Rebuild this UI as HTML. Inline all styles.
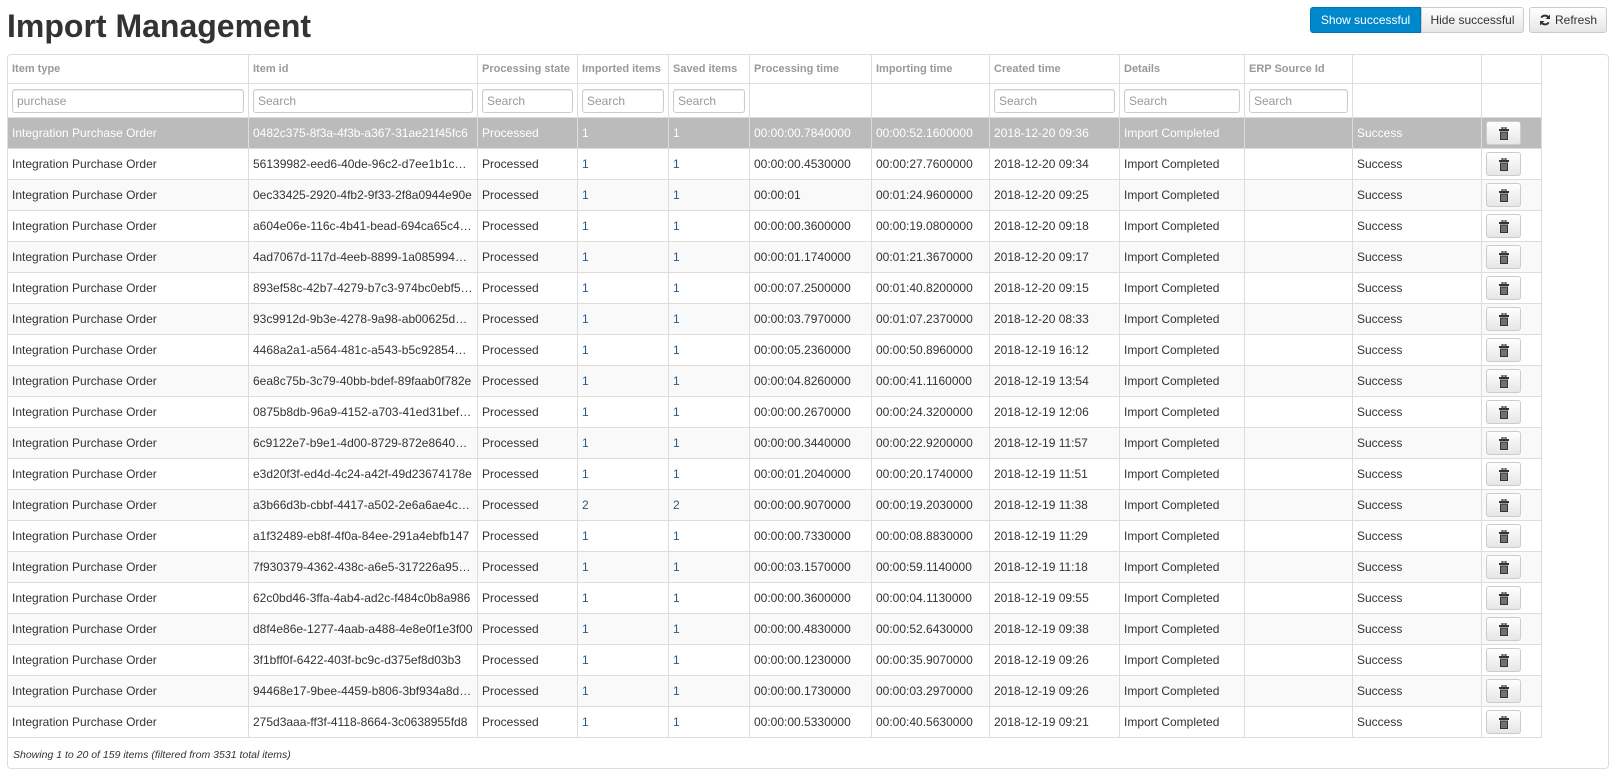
<!DOCTYPE html>
<html><head><meta charset="utf-8">
<style>
*{box-sizing:border-box;margin:0;padding:0}
body{width:1617px;height:778px;background:#fff;font-family:"Liberation Sans",Arial,sans-serif;font-size:12px;color:#333;position:relative;overflow:hidden}
h1{position:absolute;left:7px;top:8px;font-size:32px;font-weight:bold;color:#333;letter-spacing:0}
.btns{position:absolute;top:7px;left:1310px;height:26px}
.b{position:absolute;top:0;height:26px;line-height:24px;font-size:12px;text-align:center;border:1px solid #ccc;background:linear-gradient(#fff,#e6e6e6);color:#333}
.wrap{position:absolute;left:7px;top:54px;width:1602px;height:715px;border:1px solid #ddd;border-radius:4px;overflow:hidden}
table{border-collapse:collapse;table-layout:fixed;width:1534px;position:absolute;left:-1px;top:-1px}
td,th{border:1px solid #ddd;padding:0 4px;white-space:nowrap;overflow:hidden;text-overflow:ellipsis;text-align:left}
th{height:29px;font-size:11px;font-weight:bold;color:#999;vertical-align:middle}
tr.f td{height:34px}
tr.f input{width:100%;height:24px;border:1px solid #ccc;border-radius:3px;font-family:inherit;font-size:12px;padding:0 4px;color:#999;box-shadow:inset 0 1px 1px rgba(0,0,0,.08)}
tr.d td{height:31px}
tr.d:nth-child(odd) td{background:#f9f9f9}
tr.d.sel td{background:#bbb;color:#fff}
.n{color:#2a5a88}
tr.sel .n{color:#fff}
.tb{display:block;width:35px;height:24px;margin-left:0;border:1px solid #ccc;border-radius:3px;background:linear-gradient(#fff,#e6e6e6);position:relative}
.tb svg{position:absolute;left:12px;top:5px}
.foot{position:absolute;left:5px;top:694px;font-size:10.5px;font-style:italic;color:#333}
</style></head><body>
<h1>Import Management</h1>
<div class="btns">
<div class="b" style="left:0;width:111px;background:#0088cc;border-color:#0077b3;color:#fff;border-radius:3px 0 0 3px">Show successful</div>
<div class="b" style="left:111px;width:103px;border-radius:0 3px 3px 0">Hide successful</div>
<div class="b" style="left:219px;width:78px;border-radius:3px"><svg width="12" height="12" viewBox="0 0 12 12" style="vertical-align:-2px;margin-right:4px"><path d="M10 4.5A4.3 4.3 0 0 0 2.3 3.6M2 7.5a4.3 4.3 0 0 0 7.7.9" fill="none" stroke="#333" stroke-width="2"/><path d="M11 0.5v4.5H6.5z M1 11.5V7h4.5z" fill="#333"/></svg>Refresh</div>
</div>
<div class="wrap">
<table>
<colgroup><col style="width:241px"><col style="width:229px"><col style="width:100px"><col style="width:91px"><col style="width:81px"><col style="width:122px"><col style="width:118px"><col style="width:130px"><col style="width:125px"><col style="width:108px"><col style="width:129px"><col style="width:60px"></colgroup>
<tr><th>Item type</th><th>Item id</th><th>Processing state</th><th>Imported items</th><th>Saved items</th><th>Processing time</th><th>Importing time</th><th>Created time</th><th>Details</th><th>ERP Source Id</th><th></th><th></th></tr>
<tr class="f"><td><input value="purchase"></td><td><input value="Search"></td><td><input value="Search"></td><td><input value="Search"></td><td><input value="Search"></td><td></td><td></td><td><input value="Search"></td><td><input value="Search"></td><td><input value="Search"></td><td></td><td></td></tr>
</table>
<div class="foot">Showing 1 to 20 of 159 items (filtered from 3531 total items)</div>
</div>
<script>
var rows=[
["0482c375-8f3a-4f3b-a367-31ae21f45fc6",1,"00:00:00.7840000","00:00:52.1600000","2018-12-20 09:36"],
["56139982-eed6-40de-96c2-d7ee1b1c1f00",1,"00:00:00.4530000","00:00:27.7600000","2018-12-20 09:34"],
["0ec33425-2920-4fb2-9f33-2f8a0944e90e",1,"00:00:01","00:01:24.9600000","2018-12-20 09:25"],
["a604e06e-116c-4b41-bead-694ca65c4f00",1,"00:00:00.3600000","00:00:19.0800000","2018-12-20 09:18"],
["4ad7067d-117d-4eeb-8899-1a0859941f00",1,"00:00:01.1740000","00:01:21.3670000","2018-12-20 09:17"],
["893ef58c-42b7-4279-b7c3-974bc0ebf5a5",1,"00:00:07.2500000","00:01:40.8200000","2018-12-20 09:15"],
["93c9912d-9b3e-4278-9a98-ab00625d9f00",1,"00:00:03.7970000","00:01:07.2370000","2018-12-20 08:33"],
["4468a2a1-a564-481c-a543-b5c92854ef00",1,"00:00:05.2360000","00:00:50.8960000","2018-12-19 16:12"],
["6ea8c75b-3c79-40bb-bdef-89faab0f782e",1,"00:00:04.8260000","00:00:41.1160000","2018-12-19 13:54"],
["0875b8db-96a9-4152-a703-41ed31bef000",1,"00:00:00.2670000","00:00:24.3200000","2018-12-19 12:06"],
["6c9122e7-b9e1-4d00-8729-872e8640ef00",1,"00:00:00.3440000","00:00:22.9200000","2018-12-19 11:57"],
["e3d20f3f-ed4d-4c24-a42f-49d23674178e",1,"00:00:01.2040000","00:00:20.1740000","2018-12-19 11:51"],
["a3b66d3b-cbbf-4417-a502-2e6a6ae4cf00",2,"00:00:00.9070000","00:00:19.2030000","2018-12-19 11:38"],
["a1f32489-eb8f-4f0a-84ee-291a4ebfb147",1,"00:00:00.7330000","00:00:08.8830000","2018-12-19 11:29"],
["7f930379-4362-438c-a6e5-317226a95f00",1,"00:00:03.1570000","00:00:59.1140000","2018-12-19 11:18"],
["62c0bd46-3ffa-4ab4-ad2c-f484c0b8a986",1,"00:00:00.3600000","00:00:04.1130000","2018-12-19 09:55"],
["d8f4e86e-1277-4aab-a488-4e8e0f1e3f00",1,"00:00:00.4830000","00:00:52.6430000","2018-12-19 09:38"],
["3f1bff0f-6422-403f-bc9c-d375ef8d03b3",1,"00:00:00.1230000","00:00:35.9070000","2018-12-19 09:26"],
["94468e17-9bee-4459-b806-3bf934a8df00",1,"00:00:00.1730000","00:00:03.2970000","2018-12-19 09:26"],
["275d3aaa-ff3f-4118-8664-3c0638955fd8",1,"00:00:00.5330000","00:00:40.5630000","2018-12-19 09:21"]];
var trash='<span class="tb"><svg width="10" height="13" viewBox="0 0 10 13"><rect x="3" y="0" width="4" height="2" fill="none" stroke="#333" stroke-width="1"/><rect x="0" y="2" width="10" height="2" fill="#333"/><rect x="1" y="4.5" width="8" height="8.5" fill="#333"/><path d="M3 5.5v6.5M5 5.5v6.5M7 5.5v6.5" stroke="#ccc" stroke-width=".8"/></svg></span>';
var t=document.querySelector('table'),h='';
rows.forEach(function(r,i){h+='<tr class="d'+(i==0?' sel':'')+'"><td>Integration Purchase Order</td><td>'+r[0]+'</td><td>Processed</td><td class="n">'+r[1]+'</td><td class="n">'+r[1]+'</td><td>'+r[2]+'</td><td>'+r[3]+'</td><td>'+r[4]+'</td><td>Import Completed</td><td></td><td>Success</td><td>'+trash+'</td></tr>';});
t.insertAdjacentHTML('beforeend',h);
</script>
</body></html>
